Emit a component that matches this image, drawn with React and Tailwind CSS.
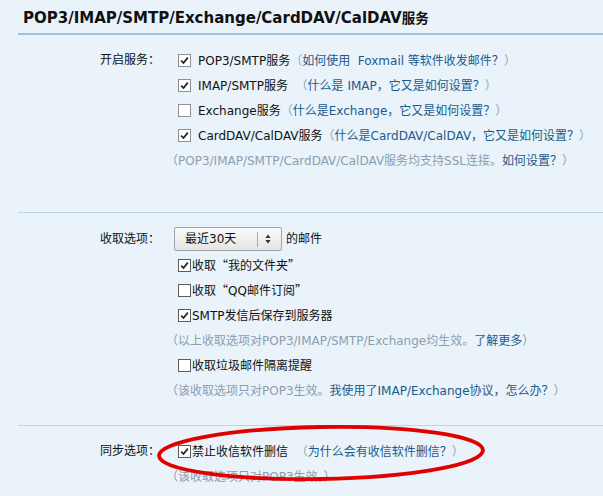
import React from "react";

const F = "font-['DejaVu_Sans','Noto_Sans_CJK_SC',sans-serif]";

function Box({ checked, dark }) {
  return (
    <span
      className={
        "inline-flex w-[13px] h-[13px] shrink-0 items-center justify-center bg-white border " +
        (dark ? "border-[#5c5c5c]" : "border-[#8d9095]")
      }
    >
      {checked && (
        <svg width="9" height="9" viewBox="0 0 9 9">
          <path d="M1.2 4.6 L3.5 7 L7.8 1.6" fill="none" stroke="#222" strokeWidth="1.7" />
        </svg>
      )}
    </span>
  );
}

const L = ({ children }) => <span className="text-[#1b5a8c]">{children}</span>;
const P = ({ children }) => <span className="text-[#8aa9c2]">{children}</span>;
const Q = ({ children }) => <span className="font-['Noto_Sans_CJK_SC',sans-serif]">{children}</span>;

function Row({ children, className = "" }) {
  return <div className={"flex items-center h-[25px] whitespace-nowrap " + className}>{children}</div>;
}

function Label({ children }) {
  return (
    <div className="w-[160px] shrink-0 text-right pr-0 h-[25px] leading-[25px] text-[#111]">{children}</div>
  );
}

export default function App() {
  return (
    <div className={"relative w-[603px] h-[496px] overflow-hidden bg-[#e9f3f9] text-[12px] text-[#111] " + F}>
      <div className="ml-[18px] pl-[5px] pt-[8px] pb-[5px] border-b-2 border-[#9fc2da]">
        <div className="h-[20px] leading-[20px] text-[15px] font-bold text-[#111] whitespace-nowrap">
          POP3/IMAP/SMTP/Exchange/CardDAV/CalDAV<span className="text-[13.5px]">服务</span>
        </div>
      </div>

      <div className="flex pt-[13px]">
        <Label>开启服务：</Label>
        <div className="ml-[18px] flex flex-col">
          <Row>
            <Box checked />
            <span className="ml-[7px]">POP3/SMTP服务</span>
            <P>（</P>
            <L>如何使用&nbsp; Foxmail 等软件收发邮件？</L>
            <P>）</P>
          </Row>
          <Row>
            <Box checked />
            <span className="ml-[7px]">IMAP/SMTP服务&nbsp;&nbsp;</span>
            <P>（</P>
            <L>什么是 IMAP，它又是如何设置？</L>
            <P>）</P>
          </Row>
          <Row>
            <Box />
            <span className="ml-[7px]">Exchange服务</span>
            <P>（</P>
            <L>什么是Exchange，它又是如何设置？</L>
            <P>）</P>
          </Row>
          <Row>
            <Box checked />
            <span className="ml-[7px]">CardDAV/CalDAV服务</span>
            <P>（</P>
            <L>什么是CardDAV/CalDAV，它又是如何设置？</L>
            <P>）</P>
          </Row>
          <Row className="-ml-[12px] text-[#8c9eb0]">
            （POP3/IMAP/SMTP/CardDAV/CalDAV服务均支持SSL连接。<L>如何设置？</L>）
          </Row>
        </div>
      </div>

      <div className="ml-[18px] mt-[39px] border-t border-[#bdd4e3]" />

      <div className="flex pt-[12px]">
        <div className="w-[160px] shrink-0 text-right h-[28px] leading-[28px]">收取选项：</div>
        <div className="ml-[18px] flex flex-col">
          <div className="flex items-center h-[28px] whitespace-nowrap">
            <div className="-ml-[4px] flex items-center w-[108px] h-[24px] rounded-[2px] border border-[#a3a3a3] bg-gradient-to-b from-[#fbfbfb] to-[#e4e4e4]">
              <span className="ml-[10px]">最近30天</span>
              <span className="ml-auto w-px h-[15px] bg-[#a8a8a8]" />
              <svg className="ml-[7px] mr-[10px]" width="6" height="10" viewBox="0 0 6 10">
                <path d="M3 0.5 L5.6 4 L0.4 4 Z" fill="#333" />
                <path d="M3 9.5 L5.6 6 L0.4 6 Z" fill="#333" />
              </svg>
            </div>
            <span className="ml-[4px]">的邮件</span>
          </div>
          <Row>
            <Box checked dark />
            <span className="ml-[1px]">
              收取<Q>“</Q>我的文件夹<Q>”</Q>
            </span>
          </Row>
          <Row>
            <Box dark />
            <span className="ml-[1px]">
              收取<Q>“</Q>QQ邮件订阅<Q>”</Q>
            </span>
          </Row>
          <Row>
            <Box checked dark />
            <span className="ml-[1px]">SMTP发信后保存到服务器</span>
          </Row>
          <Row className="-ml-[12px] text-[#8c9eb0]">
            （以上收取选项对POP3/IMAP/SMTP/Exchange均生效。<L>了解更多</L>）
          </Row>
          <Row>
            <Box dark />
            <span className="ml-[1px]">收取垃圾邮件隔离提醒</span>
          </Row>
          <Row className="-ml-[12px] text-[#8c9eb0]">
            （该收取选项只对POP3生效。<L>我使用了IMAP/Exchange协议，怎么办？</L>）
          </Row>
        </div>
      </div>

      <div className="ml-[18px] mt-[22px] border-t border-[#bdd4e3]" />

      <div className="flex pt-[13px]">
        <Label>同步选项：</Label>
        <div className="ml-[18px] flex flex-col">
          <Row>
            <Box checked dark />
            <span className="ml-[1px]">禁止收信软件删信&nbsp;&nbsp;</span>
            <P>（</P>
            <L>为什么会有收信软件删信？</L>
            <P>）</P>
          </Row>
          <Row className="-ml-[12px] text-[#8c9eb0]">（该收取选项只对POP3生效。）</Row>
        </div>
      </div>

      <svg className="absolute left-[150px] top-[420px]" width="345" height="68" viewBox="0 0 345 68">
        <ellipse cx="171" cy="33" rx="162" ry="26" fill="none" stroke="#e10000" strokeWidth="3.8" transform="rotate(-1 171 33)" />
      </svg>
    </div>
  );
}
